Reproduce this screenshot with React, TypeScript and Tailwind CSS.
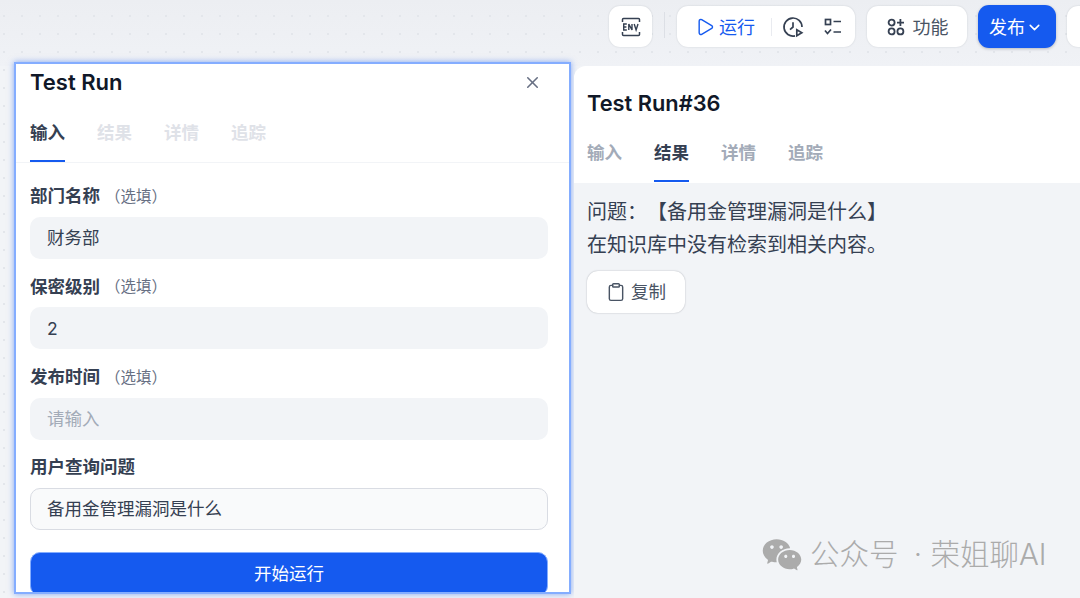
import { ChevronDown, Clipboard, Play, X } from 'lucide-react';
import { RiWechatFill } from 'react-icons/ri';

const cjk = "font-['Inter','Noto_Sans_CJK_SC',sans-serif]";

function Tabs({ active, dim }: { active: number; dim?: boolean }) {
  const tabs = ['输入', '结果', '详情', '追踪'];
  return (
    <div className="flex gap-[32px]">
      {tabs.map((tab, i) => (
        <div
          key={tab}
          className={
            i === active
              ? 'h-[50px] w-[35px] whitespace-nowrap border-b-[2px] border-[#155aef] pt-[8px] text-[17.5px] leading-[26px] font-semibold text-[#354052]'
              : dim
                ? 'h-[50px] w-[35px] whitespace-nowrap pt-[8px] text-[17.5px] leading-[26px] font-semibold text-[#dfe2e8]'
                : 'h-[50px] w-[35px] whitespace-nowrap pt-[8px] text-[17.5px] leading-[26px] font-semibold text-[#a3abb8]'
          }
        >
          {tab}
        </div>
      ))}
    </div>
  );
}

function Field({ label, optional, value, placeholder }: { label: string; optional?: boolean; value?: string; placeholder?: string }) {
  return (
    <div className="mb-[9.33px] w-[518px]">
      <div className="flex h-[37px] items-center">
        <span className="text-[17.5px] font-semibold text-[#354052]">{label}</span>
        {optional && <span className="ml-[5px] text-[15.5px] text-[#676f83]">（选填）</span>}
      </div>
      <div className="mt-[2px] flex h-[42px] items-center rounded-[10px] bg-[#f2f4f7] px-[17px] pt-[1px] text-[17.5px]">
        {value ? <span className="text-[#354052]">{value}</span> : <span className="text-[#a3abb8]">{placeholder}</span>}
      </div>
    </div>
  );
}

export default function App() {
  return (
    <div className={`relative h-[598px] w-[1080px] overflow-hidden bg-[#f2f4f7] [text-spacing-trim:space-all] ${cjk}`}>
      {/* Canvas dots */}
      <div className="absolute inset-x-0 top-0 h-[66px] bg-gradient-to-b from-[#eceef2] to-[#f0f2f6]" />
      <div className="absolute inset-0 bg-[radial-gradient(#e3e6eb_1px,transparent_1.3px)] bg-[size:18px_18px] bg-[position:-5px_7px]" />

      {/* Toolbar */}
      <div className="relative flex h-[62px] items-start pt-[6px] pl-[609px]">
        <button className="flex h-[41px] w-[43px] shrink-0 items-center justify-center rounded-[11px] bg-white shadow-[0_0_2px_rgba(16,24,40,0.15)]">
          <svg width="22" height="22" viewBox="0 0 22 22" fill="none" stroke="#354052">
            <path d="M2.5 6V3.5a1 1 0 0 1 1-1h15a1 1 0 0 1 1 1V6M2.5 16v2.5a1 1 0 0 0 1 1h15a1 1 0 0 0 1-1V16" strokeWidth="1.5" />
            <path d="M5.6 8H2.5v6h3.1M2.5 11h2.7M7.6 14V8l3.2 6V8M13 8l1.9 6L16.8 8" strokeWidth="1.4" transform="translate(1.2 0)" />
          </svg>
        </button>
        <div className="ml-[12px] mt-[6px] h-[26px] w-px shrink-0 bg-[#dcdfe5]" />
        <div className="ml-[12px] flex h-[41px] w-[178px] shrink-0 items-center rounded-[11px] bg-white pl-[18px] shadow-[0_0_2px_rgba(16,24,40,0.15)]">
          <Play size={20} className="text-[#155aef]" strokeWidth={1.7} />
          <span className="ml-[4px] pt-[1px] text-[18px] text-[#155aef]">运行</span>
          <div className="ml-[16px] h-[18px] w-px bg-[#e9ebf0]" />
          <svg className="ml-[10px]" width="22" height="22" viewBox="0 0 22 22" fill="none" stroke="#354052" strokeWidth="1.7">
            <path d="M13 19.8A9 9 0 1 1 20 11" />
            <path d="M11 6.2V11l-3 2.6" />
            <path d="M14.8 13.8v6l5-3z" />
          </svg>
          <svg className="ml-[20px]" width="18" height="18" viewBox="0 0 18 18" fill="none" stroke="#354052" strokeWidth="1.7">
            <rect x="1.5" y="1.5" width="5" height="5" />
            <path d="M9.5 3.5h7.5M9.5 14h7.5M1 12.5l2.5 3 3.5-4" />
          </svg>
        </div>
        <button className="ml-[12px] flex h-[41px] w-[100px] shrink-0 items-center justify-center gap-[8px] rounded-[11px] bg-white pt-[1px] pl-[1px] shadow-[0_0_2px_rgba(16,24,40,0.15)]">
          <svg width="18" height="18" viewBox="0 0 18 18" fill="none" stroke="#354052" strokeWidth="1.8">
            <circle cx="4.6" cy="4.6" r="3" />
            <circle cx="4.6" cy="13.4" r="3" />
            <circle cx="13.4" cy="13.4" r="3" />
            <path d="M13.4 1v7M10 4.6h7" />
          </svg>
          <span className="text-[18px] text-[#495464]">功能</span>
        </button>
        <button className="ml-[11px] flex h-[43px] w-[78px] shrink-0 -translate-y-[1px] items-center justify-center gap-[1px] rounded-[11px] bg-[#155aef] pt-[1px] pr-[2px] text-[18px] text-white shadow-[0_1px_3px_rgba(16,24,40,0.25)]">
          发布
          <ChevronDown size={17} strokeWidth={2.2} />
        </button>
        <div className="ml-[11px] h-[41px] w-[40px] shrink-0 rounded-[11px] bg-white shadow-[0_0_2px_rgba(16,24,40,0.15)]" />
      </div>

      {/* Panels */}
      <div className="relative flex h-[536px] pl-[14px]">
        <div className="h-[532px] w-[557px] shrink-0 overflow-hidden border-[2px] border-[#84adff] bg-white shadow-[0_0_6px_rgba(21,90,239,0.5)]">
          <div className="px-[14px]">
            <div className="flex h-[36px] items-center justify-between pr-[13px]">
              <span className="text-[22px] font-semibold text-[#101828]">Test Run</span>
              <X size={19} className="text-[#676f83]" strokeWidth={2} />
            </div>
          </div>
          <div className="border-b border-[#f2f4f7] px-[14px] pt-[12px]">
            <Tabs active={0} dim />
          </div>
          <div className="px-[14px] pt-[15px]">
            <Field label="部门名称" optional value="财务部" />
            <Field label="保密级别" optional value="2" />
            <Field label="发布时间" optional placeholder="请输入" />
            <div className="flex h-[37px] items-center text-[17.5px] font-semibold text-[#354052]">用户查询问题</div>
            <div className="mt-[2px] flex h-[42px] w-[518px] items-center rounded-[10px] border border-[#d9dce3] bg-[#f9fafb] px-[16px] pt-[1px] text-[17.5px] text-[#354052]">
              备用金管理漏洞是什么
            </div>
            <button className="mt-[22px] h-[44px] w-[518px] rounded-[10px] border border-[#84adff] bg-[#155aef] text-[17.5px] text-white">
              开始运行
            </button>
          </div>
        </div>

        <div className="ml-[3px] mt-[4px] flex min-w-0 flex-1 flex-col overflow-hidden rounded-tl-[12px] bg-[#f2f4f7]">
          <div className="bg-white px-[13px]">
            <div className="flex h-[63px] items-end pb-[10px] text-[21.8px] leading-[32px] font-semibold text-[#101828]">Test Run#36</div>
            <div className="h-[54px] pt-[3px]">
              <Tabs active={1} />
            </div>
          </div>
          <div className="px-[13px] pt-[13px]">
            <p className="text-[20px] leading-[33px] text-[#354052]">问题：【备用金管理漏洞是什么】</p>
            <p className="text-[20px] leading-[33px] text-[#354052]">在知识库中没有检索到相关内容。</p>
            <button className="mt-[9px] flex h-[42px] w-[98px] items-center justify-center gap-[5px] rounded-[11px] bg-white text-[17.5px] text-[#495464] shadow-[0_0_1.5px_rgba(16,24,40,0.35)]">
              <Clipboard size={20} strokeWidth={1.7} />
              复制
            </button>
          </div>
        </div>
      </div>

      {/* Watermark */}
      <div className="absolute top-[533px] left-[761px] flex h-[44px] items-center whitespace-nowrap text-[#ababab]">
        <RiWechatFill size={42} className="text-[#ababab]" />
        <span className="ml-[7px] text-[29.5px] leading-none font-light">
          公众号<span className="ml-[7px]"> · </span>荣姐聊AI
        </span>
      </div>
    </div>
  );
}
